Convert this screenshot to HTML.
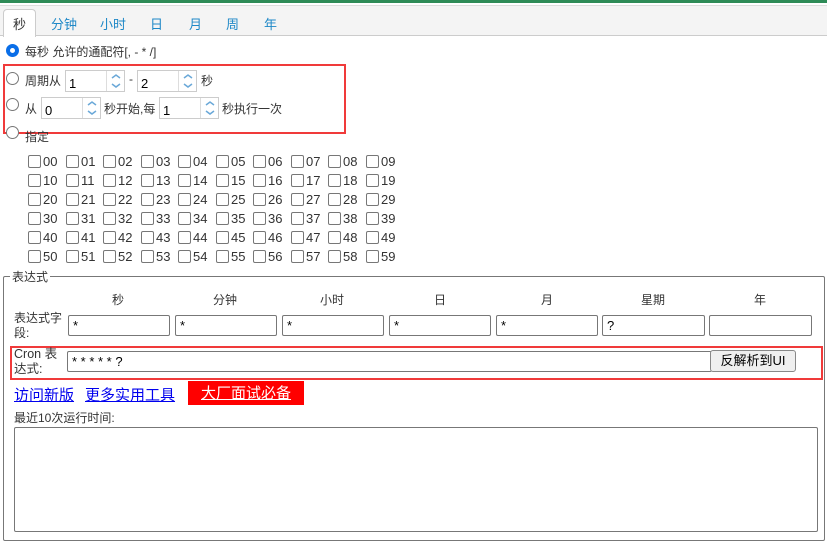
<!DOCTYPE html>
<html><head><meta charset="utf-8"><style>
*{box-sizing:border-box;margin:0;padding:0}
body{width:827px;height:543px;background:#fff;font-family:"Liberation Sans","Noto Sans CJK SC",sans-serif;font-size:12px;color:#333;position:relative;overflow:hidden}
.a{position:absolute;white-space:nowrap}
.radio{position:absolute;width:13px;height:13px;border:1px solid #777;border-radius:50%;background:#fff}
.cb{position:absolute;width:13px;height:13px;border:1px solid #777;border-radius:2px;background:#fff}
.spin{position:absolute;height:22px;border:1px solid #ccc;background:#fff;font-size:13px;color:#000;padding:5px 3px 3px}
.spin i{position:absolute;right:0;top:0;width:18px;height:20px;border-left:1px solid #ddd;font-style:normal}
.inp{position:absolute;height:21px;border:1px solid #777;border-radius:2px;background:#fff;font-size:13px;color:#000;padding:2px 4px}
.tab{position:absolute;top:14px;color:#1e88c7;font-size:13px}
</style></head><body>
<div class="a" style="left:0;top:0;width:827px;height:3px;background:#2e8b57"></div>
<div class="a" style="left:0;top:5px;width:827px;height:31px;background:#f4f4f4;border-top:1px solid #ddd;border-bottom:1px solid #ccc"></div>
<div class="a" style="left:3px;top:9px;width:33px;height:28px;background:#fff;border:1px solid #ccc;border-bottom:none;border-radius:4px 4px 0 0"></div>
<div class="tab" style="left:13px;color:#333">秒</div>
<div class="tab" style="left:51px">分钟</div>
<div class="tab" style="left:100px">小时</div>
<div class="tab" style="left:150px">日</div>
<div class="tab" style="left:189px">月</div>
<div class="tab" style="left:226px">周</div>
<div class="tab" style="left:264px">年</div>

<div class="radio" style="left:6px;top:44px;border:4px solid #0a6ee8"></div>
<div class="a" style="left:25px;top:43px">每秒 允许的通配符[, - * /]</div>
<div class="a" style="left:3px;top:64px;width:343px;height:70px;border:2px solid #f03a3a"></div>
<div class="radio" style="left:6px;top:72px"></div>
<div class="a" style="left:25px;top:72px">周期从</div>
<div class="spin" style="left:65px;top:70px;width:60px">1<i><svg width="18" height="20"><path d="M5 7l4-3 4 3M5 13l4 3 4-3" stroke="#6aa8d8" stroke-width="1.5" fill="none"/></svg></i></div>
<div class="a" style="left:129px;top:72px">-</div>
<div class="spin" style="left:137px;top:70px;width:60px">2<i><svg width="18" height="20"><path d="M5 7l4-3 4 3M5 13l4 3 4-3" stroke="#6aa8d8" stroke-width="1.5" fill="none"/></svg></i></div>
<div class="a" style="left:201px;top:72px">秒</div>
<div class="radio" style="left:6px;top:98px"></div>
<div class="a" style="left:25px;top:100px">从</div>
<div class="spin" style="left:41px;top:97px;width:60px">0<i><svg width="18" height="20"><path d="M5 7l4-3 4 3M5 13l4 3 4-3" stroke="#6aa8d8" stroke-width="1.5" fill="none"/></svg></i></div>
<div class="a" style="left:104px;top:100px">秒开始,每</div>
<div class="spin" style="left:159px;top:97px;width:60px">1<i><svg width="18" height="20"><path d="M5 7l4-3 4 3M5 13l4 3 4-3" stroke="#6aa8d8" stroke-width="1.5" fill="none"/></svg></i></div>
<div class="a" style="left:222px;top:100px">秒执行一次</div>
<div class="radio" style="left:6px;top:126px"></div>
<div class="a" style="left:25px;top:128px">指定</div>

<div id="grid"></div>
<script>
var g='',xs=[28,66,103,141,178,216,253,291,328,366];
for(var r=0;r<6;r++)for(var c=0;c<10;c++){var y=155+r*19,x=xs[c];g+='<div class="cb" style="left:'+x+'px;top:'+y+'px"></div><div class="a" style="left:'+(x+15)+'px;top:'+(y-1)+'px;font-size:13px">'+r+c+'</div>';}
document.getElementById('grid').innerHTML=g;
</script>

<div class="a" style="left:3px;top:276px;width:822px;height:265px;border:1px solid #777;border-radius:2px"></div>
<div class="a" style="left:10px;top:268px;background:#fff;padding:0 2px">表达式</div>
<div class="a" style="left:112px;top:291px">秒</div>
<div class="a" style="left:213px;top:291px">分钟</div>
<div class="a" style="left:320px;top:291px">小时</div>
<div class="a" style="left:434px;top:291px">日</div>
<div class="a" style="left:541px;top:291px">月</div>
<div class="a" style="left:641px;top:291px">星期</div>
<div class="a" style="left:754px;top:291px">年</div>
<div class="a" style="left:14px;top:311px;line-height:15px">表达式字<br>段:</div>
<div class="inp" style="left:68px;top:315px;width:102px">*</div>
<div class="inp" style="left:175px;top:315px;width:102px">*</div>
<div class="inp" style="left:282px;top:315px;width:102px">*</div>
<div class="inp" style="left:389px;top:315px;width:102px">*</div>
<div class="inp" style="left:496px;top:315px;width:102px">*</div>
<div class="inp" style="left:602px;top:315px;width:103px">?</div>
<div class="inp" style="left:709px;top:315px;width:103px"></div>
<div class="a" style="left:10px;top:346px;width:813px;height:34px;border:2px solid #f03a3a"></div>
<div class="a" style="left:14px;top:347px;line-height:15px;font-size:12.5px">Cron 表<br>达式:</div>
<div class="inp" style="left:67px;top:351px;width:645px">* * * * * ?</div>
<div class="a" style="left:710px;top:350px;width:86px;height:22px;border:1px solid #888;border-radius:3px;background:#efefef;font-size:13px;color:#000;text-align:center;line-height:20px">反解析到UI</div>
<div class="a" style="left:14px;top:384px;font-size:15px;color:#00e;text-decoration:underline">访问新版</div>
<div class="a" style="left:85px;top:384px;font-size:15px;color:#00e;text-decoration:underline">更多实用工具</div>
<div class="a" style="left:188px;top:381px;width:116px;height:24px;background:#f00;color:#fff;font-size:15px;text-decoration:underline;text-align:center;line-height:26px">大厂面试必备</div>
<div class="a" style="left:14px;top:409px">最近10次运行时间:</div>
<div class="a" style="left:14px;top:427px;width:804px;height:105px;border:1px solid #777;border-radius:2px"></div>
</body></html>
